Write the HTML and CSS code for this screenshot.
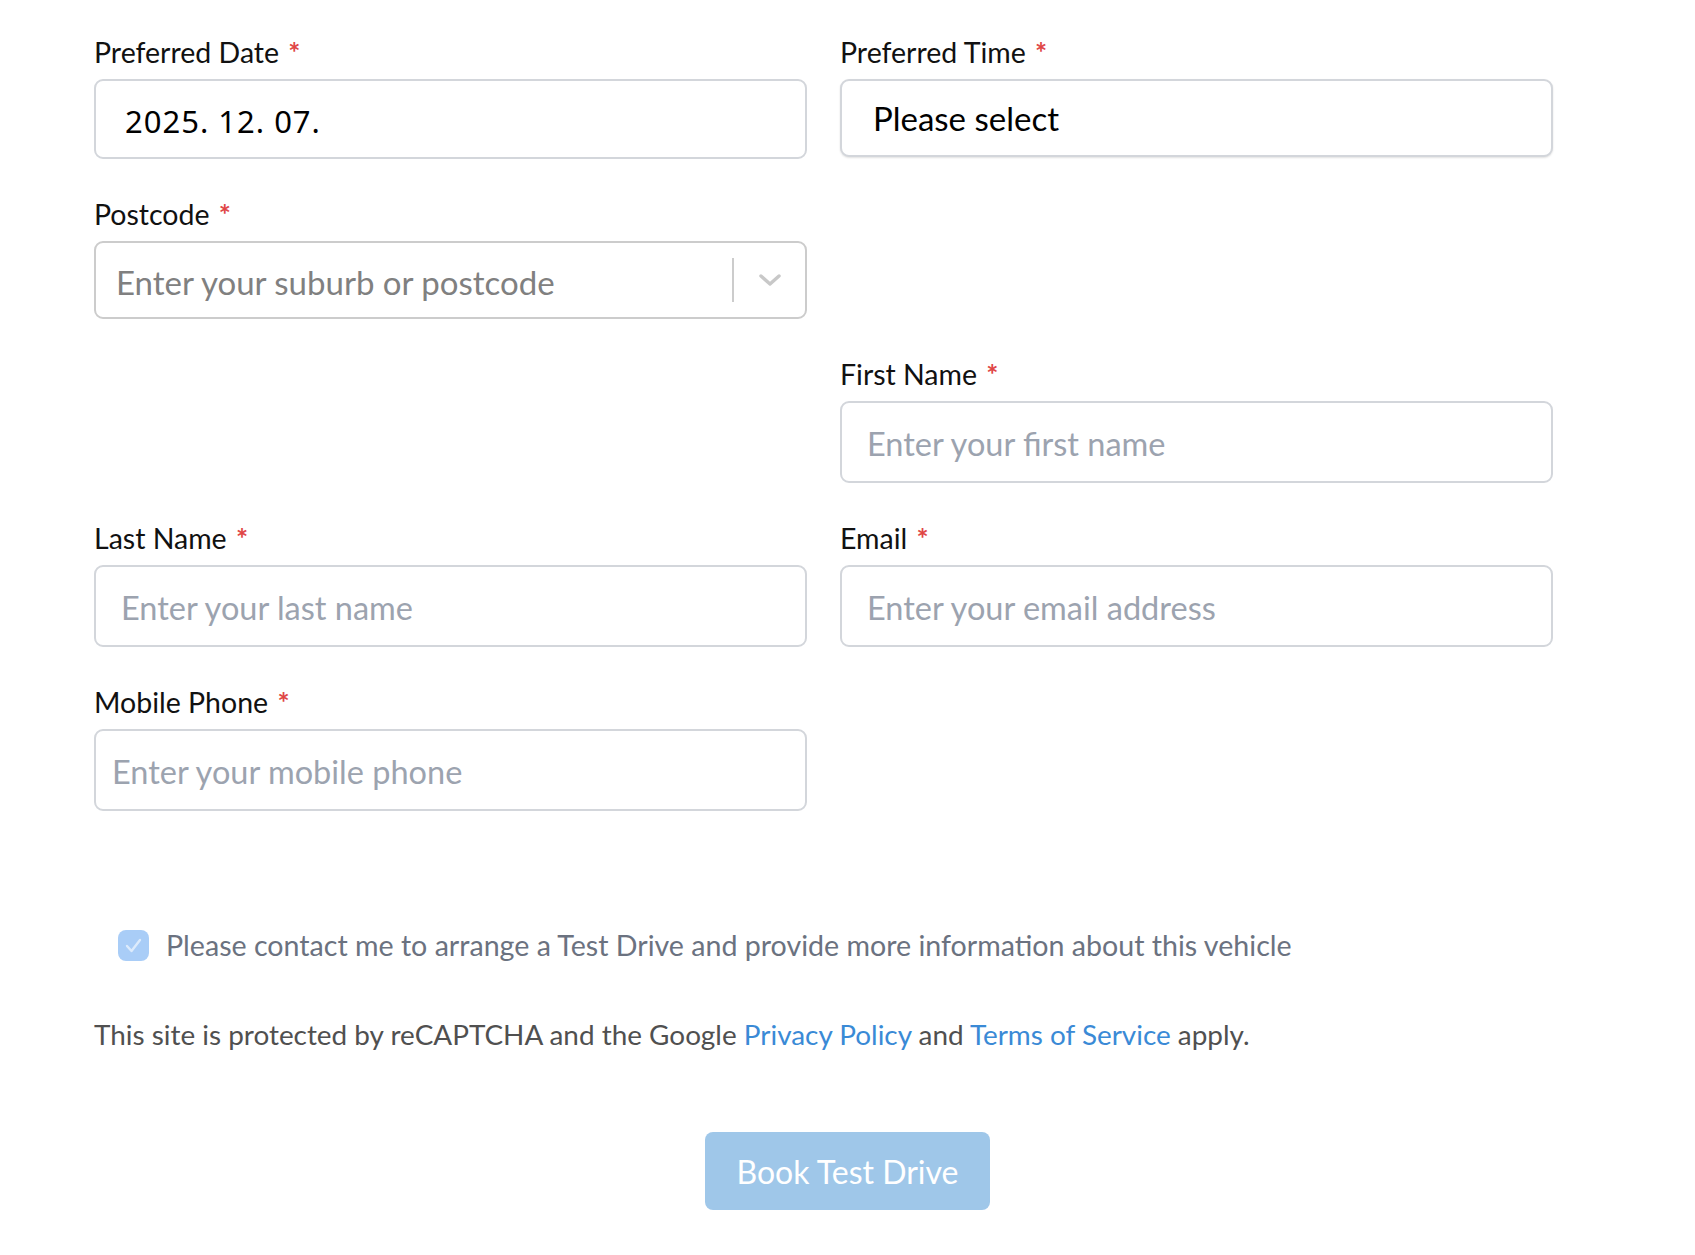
FILE: index.html
```html
<!DOCTYPE html>
<html lang="en">
<head>
<meta charset="utf-8">
<title>Book Test Drive</title>
<link rel="stylesheet" href="styles.css">
</head>
<body>
<form class="form">
  <div class="grid">
    <div class="field">
      <label class="label">Preferred Date <span class="req">*</span></label>
      <div class="input date">2025. 12. 07.</div>
    </div>
    <div class="field">
      <label class="label">Preferred Time <span class="req">*</span></label>
      <div class="input select">Please select</div>
    </div>
    <div class="field">
      <label class="label">Postcode <span class="req">*</span></label>
      <div class="input combo">
        <span class="combo-ph">Enter your suburb or postcode</span>
        <span class="combo-sep"></span>
        <svg class="chev" width="24" height="14" viewBox="0 0 24 14"><path d="M3 3 L12 11 L21 3" fill="none" stroke="#c8c8c8" stroke-width="3.4" stroke-linecap="round" stroke-linejoin="round"/></svg>
      </div>
    </div>
    <div class="field empty"></div>
    <div class="field empty"></div>
    <div class="field">
      <label class="label">First Name <span class="req">*</span></label>
      <div class="input ph ph-26">Enter your first name</div>
    </div>
    <div class="field">
      <label class="label">Last Name <span class="req">*</span></label>
      <div class="input ph ph-26">Enter your last name</div>
    </div>
    <div class="field">
      <label class="label">Email <span class="req">*</span></label>
      <div class="input ph ph-26">Enter your email address</div>
    </div>
    <div class="field">
      <label class="label">Mobile Phone <span class="req">*</span></label>
      <div class="input ph ph-17">Enter your mobile phone</div>
    </div>
  </div>

  <div class="consent">
    <span class="checkbox">
      <svg width="31" height="31" viewBox="0 0 31 31"><path d="M9 16 L13.5 21 L22 10" fill="none" stroke="rgba(255,255,255,0.6)" stroke-width="2.4" stroke-linecap="round" stroke-linejoin="round"/></svg>
    </span>
    <span class="consent-text">Please contact me to arrange a Test Drive and provide more information about this vehicle</span>
  </div>

  <p class="recaptcha">This site is protected by reCAPTCHA and the Google <a href="#">Privacy Policy</a> and <a href="#">Terms of Service</a> apply.</p>

  <div class="actions">
    <button type="button" class="btn">Book Test Drive</button>
  </div>
</form>
</body>
</html>
```

FILE: styles.css
```css
html, body {
  margin: 0;
  padding: 0;
  background: #ffffff;
}

body {
  font-family: "Lato", "Open Sans", sans-serif;
  color: #111111;
}

.form {
  width: 1695px;
  padding-top: 37px;
}

.grid {
  display: grid;
  grid-template-columns: 713px 713px;
  column-gap: 33px;
  row-gap: 40px;
  padding-left: 94px;
}

.field {
  display: flex;
  flex-direction: column;
}

.label {
  display: block;
  height: 30px;
  line-height: 30px;
  font-size: 28.5px;
  color: #111111;
  margin-bottom: 12px;
}

.req {
  color: #e04646;
  margin-left: 2px;
  font-weight: 700;
}

.input {
  box-sizing: border-box;
  height: 80px;
  border: 2px solid #d3d6db;
  border-radius: 9px;
  display: flex;
  align-items: center;
  font-size: 32.5px;
  background: #fff;
}

.date {
  padding-left: 29px;
  font-family: "Noto Sans", sans-serif;
  font-size: 31px;
  color: #000;
  letter-spacing: 1px;
  padding-top: 4px;
}

.select {
  padding-left: 31px;
  color: #000;
  height: 78px;
  box-shadow: 0 1px 2px rgba(0,0,0,0.12);
  font-size: 33px;
}

.ph {
  color: #9ca3af;
  height: 82px;
  padding-top: 3px;
}

.ph-26 { padding-left: 25px; }
.ph-17 { padding-left: 16px; }

.combo {
  height: 78px;
  border-color: #cccccc;
  padding-left: 20px;
  padding-right: 23px;
  padding-top: 3px;
  font-size: 33px;
}

.combo-ph {
  flex: 1;
  color: #808080;
}

.combo-sep {
  width: 2px;
  height: 44px;
  background: #cccccc;
  margin-right: 24px;
  margin-top: -3px;
}

.chev {
  display: block;
  margin-top: -3px;
}

.consent {
  display: flex;
  align-items: center;
  margin-top: 116px;
  padding-left: 118px;
}

.checkbox {
  width: 31px;
  height: 31px;
  border-radius: 8px;
  background: #a9cdf7;
  display: flex;
  align-items: center;
  justify-content: center;
  margin-right: 17px;
}

.checkbox svg { display: block; }

.consent-text {
  font-size: 28.6px;
  color: #6b7280;
  line-height: 36px;
}

.recaptcha {
  margin: 53px 0 0 0;
  padding-left: 94px;
  font-size: 27.9px;
  line-height: 36px;
  color: #505050;
}

.recaptcha a {
  color: #3a8ad6;
  text-decoration: none;
}

.actions {
  display: flex;
  justify-content: center;
  margin-top: 80px;
}

.btn {
  width: 285px;
  height: 78px;
  border: none;
  border-radius: 8px;
  background: #9fc7e9;
  color: #ffffff;
  font-family: "Lato", "Open Sans", sans-serif;
  font-size: 32px;
  padding: 0;
}
```
